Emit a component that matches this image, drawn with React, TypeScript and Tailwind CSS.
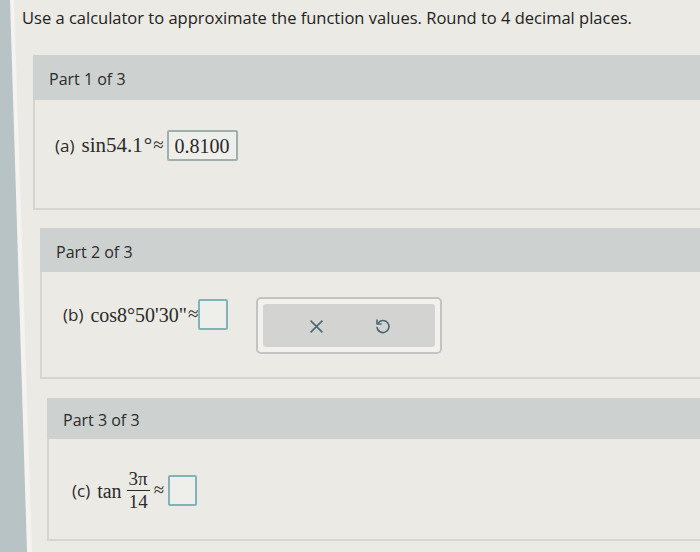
import React from "react";

const sans = "font-['Open_Sans','Liberation_Sans',sans-serif]";
const serif = "font-['Liberation_Serif','DejaVu_Serif',serif]";

const AnswerBox = ({ value, w = "w-[30px]" }: { value?: string; w?: string }) => (
  <div
    className={`${w} h-[31px] flex items-center justify-center border-2 ${
      value ? "border-[#9fb0ac]" : "border-[#7fb3b5]"
    } bg-[#eeeeea] rounded-[2px] text-[20px] text-[#2a2a2a] ${serif}`}
  >
    {value}
  </div>
);

const PartHeader = ({ label, h }: { label: string; h: string }) => (
  <div className={`${h} bg-[#cdd1cf] flex items-center pl-[16px] pt-[3px] text-[16px] text-[#2b2b2b] ${sans}`}>
    {label}
  </div>
);

export default function App() {
  return (
    <div className="relative w-[700px] h-[552px] overflow-hidden bg-[#ebeae5]">
      {/* screen bezel on the left */}
      <div className="absolute left-0 top-0 h-full w-[34px] bg-[#f4f3ef] [clip-path:polygon(0_0,14px_0,32px_100%,0_100%)]" />
      <div className="absolute left-0 top-0 h-full w-[30px] bg-[#b8c3c5] [clip-path:polygon(0_0,10px_0,27px_100%,0_100%)]" />

      <div className="relative">
        <p className={`pt-[7px] pl-[22px] text-[16.5px] leading-[22px] text-[#222] ${sans}`}>
          Use a calculator to approximate the function values. Round to 4 decimal places.
        </p>

        {/* Part 1 */}
        <div className="ml-[33px] mt-[26px]">
          <PartHeader label="Part 1 of 3" h="h-[45px]" />
          <div className="h-[110px] border-l-2 border-b-2 border-[#d6d6d1] pl-[20px] pt-[30px]">
            <div className="flex items-center h-[31px] text-[#2b2b2b]">
              <span className={`text-[17px] mr-[7px] ${sans}`}>(a)</span>
              <span className={`text-[21px] ${serif}`}>sin54.1</span>
              <span className={`text-[21px] ml-[1px] ${serif}`}>°</span>
              <span className={`text-[19px] ml-[1px] ${serif}`}>≈</span>
              <span className="ml-[3px]">
                <AnswerBox value="0.8100" w="w-[71px]" />
              </span>
            </div>
          </div>
        </div>

        {/* Part 2 */}
        <div className="ml-[40px] mt-[18px]">
          <PartHeader label="Part 2 of 3" h="h-[44px]" />
          <div className="h-[107px] border-l-2 border-b-2 border-[#d6d6d1] pl-[21px] pt-[25px]">
            <div className="flex items-start text-[#2b2b2b]">
              <div className="flex items-center h-[31px] mt-[2px]">
                <span className={`text-[17px] mr-[7px] ${sans}`}>(b)</span>
                <span className={`text-[20px] ${serif}`}>cos8°50'30"</span>
                <span className={`text-[19px] ml-[1px] ${serif}`}>≈</span>
                <AnswerBox />
              </div>
              <div className="ml-[28px] w-[186px] h-[57px] border-2 border-[#c3c4c1] rounded-[5px] p-[5px] bg-[#f2f1ed]">
                <div className="h-full rounded-[3px] bg-[#d3d4d1] flex items-center justify-around px-[20px]">
                  <svg width="15" height="15" viewBox="0 0 14 14" className="mt-[2px]">
                    <path d="M1.5 1.5 L12.5 12.5 M12.5 1.5 L1.5 12.5" stroke="#4c6673" strokeWidth="1.5" fill="none" />
                  </svg>
                  <svg width="16" height="18" viewBox="0 0 16 18" className="mt-[5px]">
                    <path
                      d="M4.5 3.5 A6 6 0 1 1 3 8.5"
                      stroke="#4c6673"
                      strokeWidth="1.6"
                      fill="none"
                      strokeLinecap="round"
                    />
                    <path d="M3 1 L3 5 L7 5" stroke="#4c6673" strokeWidth="1.6" fill="none" strokeLinecap="round" strokeLinejoin="round" />
                  </svg>
                </div>
              </div>
            </div>
          </div>
        </div>

        {/* Part 3 */}
        <div className="ml-[47px] mt-[19px]">
          <PartHeader label="Part 3 of 3" h="h-[41px]" />
          <div className="h-[102px] border-l-2 border-b-2 border-[#d6d6d1] pl-[23px] pt-[30px]">
            <div className="flex items-center text-[#2b2b2b]">
              <span className={`text-[17px] mr-[7px] ${sans}`}>(c)</span>
              <span className={`text-[20px] mr-[5px] ${serif}`}>tan</span>
              <div className={`flex flex-col items-center text-[19px] leading-[20px] ${serif}`}>
                <span className="px-[2px]">3π</span>
                <span className="w-full h-[1px] bg-[#2b2b2b] my-[1px]" />
                <span className="px-[2px]">14</span>
              </div>
              <span className={`text-[19px] mx-[4px] ${serif}`}>≈</span>
              <AnswerBox w="w-[29px]" />
            </div>
          </div>
        </div>
      </div>
    </div>
  );
}
